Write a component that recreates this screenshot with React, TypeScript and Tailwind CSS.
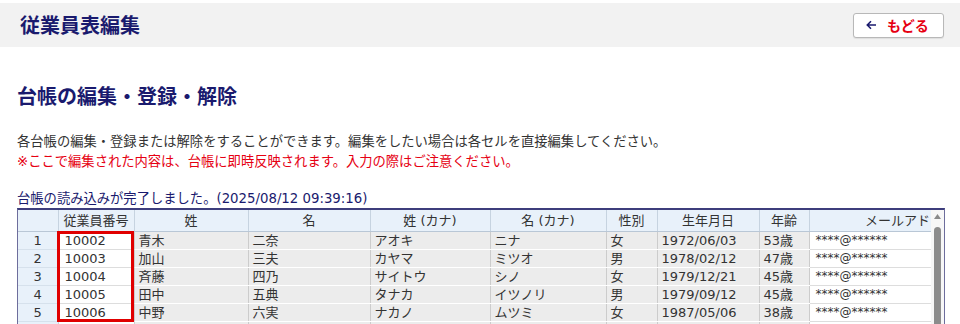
import React from 'react';

interface Employee {
  id: string;
  sei: string;
  mei: string;
  seiKana: string;
  meiKana: string;
  gender: string;
  birth: string;
  age: string;
  mail: string;
}

const employees: Employee[] = [
  { id: '10002', sei: '青木', mei: '二奈', seiKana: 'アオキ', meiKana: 'ニナ', gender: '女', birth: '1972/06/03', age: '53歳', mail: '****@******' },
  { id: '10003', sei: '加山', mei: '三夫', seiKana: 'カヤマ', meiKana: 'ミツオ', gender: '男', birth: '1978/02/12', age: '47歳', mail: '****@******' },
  { id: '10004', sei: '斉藤', mei: '四乃', seiKana: 'サイトウ', meiKana: 'シノ', gender: '女', birth: '1979/12/21', age: '45歳', mail: '****@******' },
  { id: '10005', sei: '田中', mei: '五典', seiKana: 'タナカ', meiKana: 'イツノリ', gender: '男', birth: '1979/09/12', age: '45歳', mail: '****@******' },
  { id: '10006', sei: '中野', mei: '六実', seiKana: 'ナカノ', meiKana: 'ムツミ', gender: '女', birth: '1987/05/06', age: '38歳', mail: '****@******' },
  { id: '10007', sei: '東山', mei: '七海', seiKana: 'ヒガシヤマ', meiKana: 'ナナミ', gender: '女', birth: '1990/07/07', age: '35歳', mail: '****@******' },
];

const headers = ['', '従業員番号', '姓', '名', '姓 (カナ)', '名 (カナ)', '性別', '生年月日', '年齢', 'メールアドレス'];
const widths = [40, 76, 114, 122, 120, 116, 51, 102, 50, 203];

const grayCell = 'bg-[#ececec] border-r border-r-[#cccccc] border-b border-b-white px-[4px] text-left';
const whiteCell = 'bg-white border-r border-r-[#cccccc] border-b border-b-[#dddddd] px-[4px] text-left';

export default function App() {
  return (
    <div className="w-[960px] h-[324px] overflow-hidden bg-white text-[#333] font-['DejaVu_Sans','Noto_Sans_CJK_JP',sans-serif]">
      {/* page header */}
      <div className="mt-[3px] h-[44px] bg-[#f2f2f2] flex items-center justify-between pl-[20px] pr-[16px]">
        <h1 className="text-[20px] font-bold text-[#1a1a6e] font-['Noto_Sans_CJK_JP',sans-serif] leading-none">従業員表編集</h1>
        <button className="w-[91px] h-[25px] bg-white border border-[#b8b8b8] rounded-[3px] shadow-[0_1px_1px_rgba(0,0,0,0.08)] flex items-center pl-[12px]">
          <svg width="11" height="10" viewBox="0 0 11 10" className="text-[#1a1a6e]">
            <path d="M10 5H1.5M5 1.3L1.3 5L5 8.7" fill="none" stroke="currentColor" strokeWidth="1.6" />
          </svg>
          <span className="ml-[10px] text-[14px] font-bold text-[#e60012] font-['Noto_Sans_CJK_JP',sans-serif] leading-none">もどる</span>
        </button>
      </div>

      <div className="pl-[17px] pr-[16px]">
        <h2 className="mt-[35px] text-[20px] leading-[28px] font-bold text-[#1a1a6e] font-['Noto_Sans_CJK_JP',sans-serif]">
          台帳の編集・登録・解除
        </h2>

        <div className="mt-[22px] text-[13.3px] leading-[20px]">
          <p className="text-[#333]">各台帳の編集・登録または解除をすることができます。編集をしたい場合は各セルを直接編集してください。</p>
          <p className="text-[#e60012]">※ここで編集された内容は、台帳に即時反映されます。入力の際はご注意ください。</p>
        </div>

        <p className="mt-[18px] text-[13.3px] leading-[18px] text-[#1a1a6e]">台帳の読み込みが完了しました。(2025/08/12 09:39:16)</p>

        {/* grid */}
        <div className="relative w-[928px] h-[140px] border-t-2 border-t-[#3d3d7c] border-x border-x-[#6d6d9c] flex">
          <div className="flex-1 overflow-hidden">
            <table className="table-fixed border-collapse text-[13px] leading-[17px] w-[994px]">
              <colgroup>
                {widths.map((w, i) => (
                  <col key={i} style={{ width: w }} />
                ))}
              </colgroup>
              <thead>
                <tr className="h-[21px] bg-[#e8f1fa]">
                  {headers.map((h, i) => (
                    <th
                      key={i}
                      className="font-normal text-center text-[#333] border-r border-r-[#c6d3e0] border-b border-b-[#b9c7d6] whitespace-nowrap overflow-hidden"
                    >
                      {h}
                    </th>
                  ))}
                </tr>
              </thead>
              <tbody>
                {employees.map((e, i) => (
                  <tr key={e.id} className="h-[18px]">
                    <td className="bg-[#e8f1fa] text-center border-r border-r-[#c6d3e0] border-b border-b-[#d6e1ec]">{i + 1}</td>
                    <td className={whiteCell + ' pl-[6px]'}>{e.id}</td>
                    <td className={grayCell}>{e.sei}</td>
                    <td className={grayCell}>{e.mei}</td>
                    <td className={grayCell}>{e.seiKana}</td>
                    <td className={grayCell}>{e.meiKana}</td>
                    <td className={grayCell}>{e.gender}</td>
                    <td className={grayCell}>{e.birth}</td>
                    <td className={grayCell}>{e.age}</td>
                    <td className={whiteCell + ' pl-[6px] text-[12px]'}>{e.mail}</td>
                  </tr>
                ))}
              </tbody>
            </table>
          </div>

          {/* vertical scrollbar */}
          <div className="w-[13px] bg-[#f7f7f7] flex flex-col items-center pt-[4px]">
            <svg width="7" height="5" viewBox="0 0 7 5">
              <path d="M3.5 0L7 5H0Z" fill="#8a8a8a" />
            </svg>
            <div className="mt-[8px] w-[7px] flex-1 rounded-[4px] bg-[#8c8c8c]" />
          </div>

          {/* highlight on employee number column */}
          <div className="absolute left-[39px] top-[21px] w-[77px] h-[91px] border-[3px] border-[#e00000] pointer-events-none" />
        </div>
      </div>
    </div>
  );
}
